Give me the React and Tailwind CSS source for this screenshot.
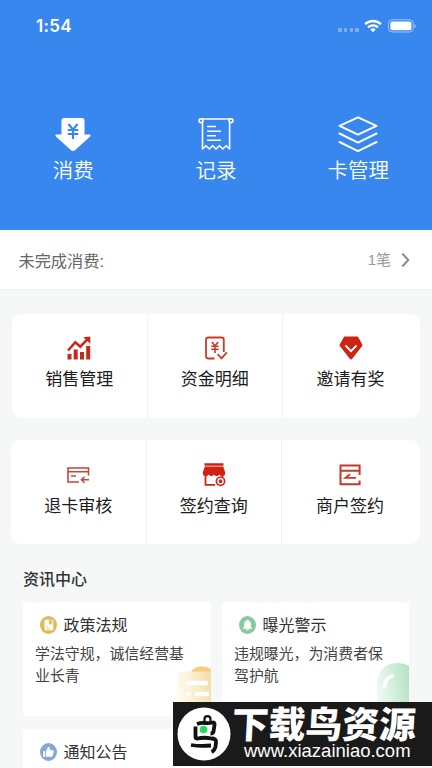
const headerActions = [
  { label: '消费', icon: PayIcon },
  { label: '记录', icon: ReceiptIcon },
  { label: '卡管理', icon: LayersIcon },
]

const salesMenu = [
  { label: '销售管理', icon: ChartIcon },
  { label: '资金明细', icon: FundsIcon },
  { label: '邀请有奖', icon: GemIcon },
]

const signMenu = [
  { label: '退卡审核', icon: CardReturnIcon },
  { label: '签约查询', icon: ShopIcon },
  { label: '商户签约', icon: ContractIcon },
]

export default function App() {
  return (
    <div
      className="relative h-[768px] w-[432px] overflow-hidden bg-[#f6f8f8]"
      style={{ fontFamily: '"Noto Sans CJK SC", sans-serif' }}
    >
      {/* Header */}
      <header className="h-[230px] bg-[#3887ee] text-white">
        <StatusBar />
        <div className="grid grid-cols-3 pt-[64px] pr-[2px] pl-[2px]">
          {headerActions.map(({ label, icon: Icon }) => (
            <div key={label} className="flex flex-col items-center last:pr-[1px]">
              <Icon />
              <span className="mt-[1px] text-[20.5px] leading-[28px] font-[350]">{label}</span>
            </div>
          ))}
        </div>
      </header>

      {/* Unfinished orders */}
      <div
        className="flex h-[60px] items-center border-b border-[#f0f2f2] bg-white pr-[22px] pl-[18.5px]"
        style={{ fontFamily: '"Liberation Sans", "Noto Sans CJK SC", sans-serif' }}
      >
        <span className="mt-[3px] text-[16.2px] text-[#666]">未完成消费:</span>
        <span className="mt-[2px] ml-auto text-[15px] text-[#999]">1笔</span>
        <svg className="ml-[10px]" width="9" height="16" viewBox="0 0 9 16" fill="none" stroke="#8e8e8e" strokeWidth="2.1">
          <path d="M1.3 1.5 7.2 8l-5.9 6.5" />
        </svg>
      </div>

      <div className="mt-[24px] mr-[12px] ml-[12px]">
        <MenuCard items={salesMenu} className="pt-[20px]" />
      </div>
      <div className="mt-[22px] mr-[12px] ml-[11px]">
        <MenuCard items={signMenu} className="pt-[20.5px]" />
      </div>

      {/* News */}
      <section className="pr-[23px] pl-[23px]">
        <h2 className="mt-[21px] h-[37px] text-[16px] leading-[26px] font-medium text-[#333]">资讯中心</h2>
        <div className="grid grid-cols-[188px_187px] gap-x-[11px] gap-y-[13px]">
          <NewsCard title="政策法规" text="学法守规，诚信经营基业长青" icon={<PolicyIcon />} art={<PolicyArt />} />
          <NewsCard title="曝光警示" text="违规曝光，为消费者保驾护航" icon={<BellIcon />} art={<BellArt />} />
          <NewsCard title="通知公告" text="" icon={<ThumbIcon />} />
        </div>
      </section>

      <SiteBadge />
    </div>
  )
}

function StatusBar() {
  return (
    <div className="flex h-[52px] items-center pr-[16.5px] pl-[36px]">
      <span className="mt-[1px] text-[17px] font-semibold tracking-[.3px]" style={{ fontFamily: 'Inter, sans-serif' }}>1:54</span>
      <div className="ml-auto flex items-center">
        <div className="mt-[8px] flex gap-[2.2px]">
          {[0, 1, 2, 3].map((i) => (
            <span key={i} className="h-[3.4px] w-[3.4px] rounded-[1px] bg-white/35" />
          ))}
        </div>
        <svg className="ml-[5px]" width="18" height="14" viewBox="0 0 18 14" fill="none" stroke="#fff" strokeWidth="2.4">
          <path d="M1.1 5.2a11.3 11.3 0 0 1 15.8 0" />
          <path d="M4 8.4a7.2 7.2 0 0 1 10 0" />
          <path d="M9 13.2 6.3 10.5a3.8 3.8 0 0 1 5.4 0Z" fill="#fff" stroke="none" />
        </svg>
        <svg className="ml-[6px]" width="28" height="14" viewBox="0 0 28 14">
          <rect x=".6" y=".8" width="24.6" height="12.2" rx="3.6" fill="none" stroke="#fff" strokeOpacity=".5" />
          <rect x="2.4" y="2.5" width="21" height="8.8" rx="2" fill="#fff" />
          <path d="M26.4 5v4c.9-.3 1.4-1.1 1.4-2s-.5-1.7-1.4-2Z" fill="#fff" fillOpacity=".5" />
        </svg>
      </div>
    </div>
  )
}

function MenuCard({ items, className }) {
  return (
    <div className="grid h-[104px] grid-cols-[135.5px_135.5px_1fr] divide-x divide-[#f1f3f3] overflow-hidden rounded-[10px] bg-white">
      {items.map(({ label, icon: Icon }) => (
        <div key={label} className={`flex flex-col items-center last:pr-[2px] ${className}`}>
          <Icon />
          <span className="mt-[4px] text-[17px] leading-[24px] text-[#1c1c1c]">{label}</span>
        </div>
      ))}
    </div>
  )
}

function NewsCard({ title, text, icon, art }) {
  return (
    <div className="relative h-[114px] overflow-hidden rounded-[4px] bg-white pt-[11px]">
      <div className="flex h-[24px] items-center pl-[17px]">
        {icon}
        <span className="-mt-[2px] ml-[6.5px] text-[16px] leading-[24px] text-[#333]">{title}</span>
      </div>
      <p className="mt-[5px] ml-[12px] w-[152px] text-[14.9px] leading-[22px] text-[#444]">{text}</p>
      {art && <div className="absolute right-0 bottom-0">{art}</div>}
    </div>
  )
}

/* Header icons */

function PayIcon() {
  return (
    <svg width="36" height="38" viewBox="0 0 36 38">
      <path d="M9 2h18q2.500 0 2.500 2.500V18.500h5q1.900.4.6 2.100L20 34.300q-2 1.500-4 0L.9 20.600q-1.300-1.700.6-2.100h5V4.500Q6.500 2 9 2Z" fill="#fff" />
      <path d="m13.500 8 4.500 5.600L22.500 8M12.700 14h10.600M12.700 18h10.600M18 13.500V23" fill="none" stroke="#3887ee" strokeWidth="2.2" />
    </svg>
  )
}

function ReceiptIcon() {
  return (
    <svg width="36" height="38" viewBox="0 0 36 38" fill="none" stroke="#fff" strokeWidth="1.6">
      <path d="M3 3h30M4.500 5.500V33l3.400-3.300 3.400 3.300 3.400-3.300L18 33l3.400-3.300 3.400 3.300 3.400-3.300 3.400 3.300V5.500" strokeLinejoin="round" />
      <circle cx="3" cy="4.7" r="1.9" />
      <circle cx="33" cy="4.7" r="1.9" />
      <path d="M9 10.500h9M9 15.300h14M9 19.700h9M9 24.200h14" />
    </svg>
  )
}

function LayersIcon() {
  return (
    <svg width="40" height="38" viewBox="0 0 40 38" fill="none" stroke="#fff" strokeWidth="2" strokeLinejoin="round" strokeLinecap="round">
      <path d="M20 1.300 38.500 9.800 20 18.700 1.500 9.800Z" />
      <path d="M1.500 17.500 20 26.700l18.500-9.200" />
      <path d="M1.500 26 20 35.200 38.500 26" />
    </svg>
  )
}

/* Menu icons */

function ChartIcon() {
  return (
    <svg width="26" height="28" viewBox="0 0 26 28" fill="#c72819">
      <path d="M1.500 20h4v5.500h-4zM7.700 15.500h4v10h-4zM14 18h4v7.500h-4zM20.200 12h4v13.500h-4z" />
      <path d="m2 16.500 7.300-8.200 5 4.400 7.200-7.500" fill="none" stroke="#c72819" strokeWidth="2.5" />
      <path d="m17.300 3.300 7-.8v7.200Z" />
    </svg>
  )
}

function FundsIcon() {
  return (
    <svg width="26" height="28" viewBox="0 0 26 28" fill="none" stroke="#c93a2d" strokeWidth="1.8">
      <path d="M12.500 24.500H6.500Q4 24.500 4 22V5.800q0-2.300 2.500-2.300h13q2.300 0 2.300 2.300V18" />
      <path d="m9.800 8 3.200 3.800L16.200 8M9.300 12.300h7.400M9.300 15.200h7.400M13 11.500V19" strokeWidth="1.6" />
      <path d="m15.500 20 4 4.300 5.300-6" />
    </svg>
  )
}

function GemIcon() {
  return (
    <svg width="26" height="28" viewBox="0 0 26 28">
      <path d="M6.800 2.500h12.400q.7 0 1.100.7l4 7.200q.5.900-.1 1.700L14 25q-1 1-2 0L1.800 12.100q-.6-.8-.1-1.700l4-7.200q.4-.7 1.100-.7Z" fill="#ce2414" />
      <path d="m7.500 11.500 5.500 5.700 5.500-5.700" fill="none" stroke="#fff" strokeWidth="1.9" />
    </svg>
  )
}

function CardReturnIcon() {
  return (
    <svg width="26" height="28" viewBox="0 0 26 28" fill="none" stroke="#cf4136" strokeWidth="1.6">
      <path d="M14 21H3V7h20.500v7.500M3 10.700h20.500" />
      <path d="M6 15h5M24 18.800h-7M19.500 15.800l-3 3 3 3" />
    </svg>
  )
}

function ShopIcon() {
  return (
    <svg width="26" height="28" viewBox="0 0 26 28">
      <path d="M3.500 2.300h19v2.500h-19zM3.800 5.600h18.400l2 5.900q.2 3.500-3.200 3.500-1.700 0-2.700-1.500Q17.300 15 15.600 15T13 13.500Q12 15 10.400 15t-2.700-1.500Q6.700 15 5 15q-3.400 0-3.200-3.500Z" fill="#d32014" />
      <path d="M4.500 14v9.800h9.500M21.500 14v2" fill="none" stroke="#d32014" strokeWidth="1.8" />
      <circle cx="19.5" cy="20.3" r="4.9" fill="#c92c20" />
      <circle cx="19.5" cy="20.3" r="2.6" fill="none" stroke="#fff" strokeWidth="1.3" />
    </svg>
  )
}

function ContractIcon() {
  return (
    <svg width="26" height="28" viewBox="0 0 26 28" fill="none" stroke="#c9362a" strokeWidth="2">
      <path d="M22.600 14V4.500H3.500v18.800h19.100V19.500M3.500 9.800h19.100" />
      <path d="M19 16.800H8.500l4.500-3.500" strokeWidth="1.8" />
    </svg>
  )
}

/* News icons */

function PolicyIcon() {
  return (
    <svg width="17" height="18" viewBox="0 0 17 18">
      <ellipse cx="8.5" cy="9" rx="8.5" ry="9" fill="#e2b858" />
      <rect x="4.5" y="3.8" width="8.8" height="10.5" rx="1.2" fill="#fff" />
      <path d="M9.300 4.500h2.500v4l-1.250-1-1.250 1ZM6 10.700h2M6 12.500h4" fill="#e2b858" stroke="#e2b858" strokeWidth=".6" />
    </svg>
  )
}

function BellIcon() {
  return (
    <svg width="17" height="18" viewBox="0 0 17 18">
      <ellipse cx="8.5" cy="9" rx="8.5" ry="9" fill="#85cb9d" />
      <path d="M8.500 3.500q.9 0 1 .9 2.500.8 2.500 3.600v2.800l1.300 1.900H3.700L5 10.800V8q0-2.800 2.500-3.600.1-.9 1-.9ZM7 13.300h3q-.3 1.300-1.500 1.300T7 13.300Z" fill="#fff" />
    </svg>
  )
}

function ThumbIcon() {
  return (
    <svg width="17" height="18" viewBox="0 0 17 18">
      <ellipse cx="8.5" cy="9" rx="8.5" ry="9" fill="#86a7dc" />
      <path d="M3.200 8h2v5.700h-2zM6 8l2.200-4.300q1.900.1 1.600 2.100L9.500 7.300h3.200q1.200.2 1 1.400l-.9 3.900q-.3 1.100-1.400 1.100H6Z" fill="#fff" />
    </svg>
  )
}

function PolicyArt() {
  return (
    <svg width="34" height="50" viewBox="0 0 34 50">
      <defs>
        <linearGradient id="policy" x1="0" y1=".2" x2="1" y2="0">
          <stop offset="0" stopColor="#fffaf0" />
          <stop offset=".4" stopColor="#fbf0d2" />
          <stop offset="1" stopColor="#f3dda6" />
        </linearGradient>
      </defs>
      <path d="M14 6q3-6 12-5.500 5 0 8 2.500v6H14Z" fill="#f5cf7c" />
      <path d="M7 5.500h27V50H0V12q0-6.500 7-6.500Z" fill="url(#policy)" />
      <path d="M11 17h18M11 28h1M20 28h10" stroke="#fff" strokeWidth="4.5" strokeLinecap="round" />
    </svg>
  )
}

function BellArt() {
  return (
    <svg width="32" height="53" viewBox="0 0 32 53">
      <defs>
        <linearGradient id="bell" x1="0" y1=".3" x2="1" y2="0">
          <stop offset="0" stopColor="#ecf8f0" />
          <stop offset=".45" stopColor="#d2eedb" />
          <stop offset="1" stopColor="#b2e2c2" />
        </linearGradient>
      </defs>
      <path d="M0 53V22Q1 0 21 0q6 0 11 3v50Z" fill="url(#bell)" />
      <path d="M7.500 24q0-8 7.500-11" fill="none" stroke="#fff" strokeWidth="4" strokeLinecap="round" />
    </svg>
  )
}

/* Download site badge */
function SiteBadge() {
  return (
    <div className="absolute top-[702px] left-[173px] flex h-[64px] w-[259px] items-center bg-[#1a1a1a] pl-[4px] text-white">
      <svg className="shrink-0" width="54" height="54" viewBox="0 0 54 54">
        <circle cx="27" cy="27" r="26.5" fill="#fff" />
        <g fill="none" stroke="#111" strokeWidth="3.8">
          <path d="M27.500 14v-2q0-2.800 3-2.800t3 3v2.500" strokeWidth="2.2" />
          <path d="M20 17q4-1.500 8-1t8-.5q2 0 1.500 2.500l-1 6.500q-.5 2-3 2" />
          <path d="M18.500 19.500v10.500q0 1.500 2 1.500 7-1.500 14 0 5 0 4.500 4l-.5 4q-.8 4-4 5.500" />
          <path d="M14 38q9 1.500 20 .5" />
        </g>
        <circle cx="26.5" cy="22.5" r="3.8" fill="#27d860" />
      </svg>
      <div className="ml-[1px] flex flex-col">
        <span className="h-[34px] -skew-x-3 text-[36.8px] leading-[32px] font-black whitespace-nowrap">下载鸟资源</span>
        <span
          className="ml-[12px] text-[18.5px] leading-[22px] whitespace-nowrap"
          style={{ fontFamily: '"Liberation Sans", sans-serif' }}
        >
          www.xiazainiao.com
        </span>
      </div>
    </div>
  )
}
